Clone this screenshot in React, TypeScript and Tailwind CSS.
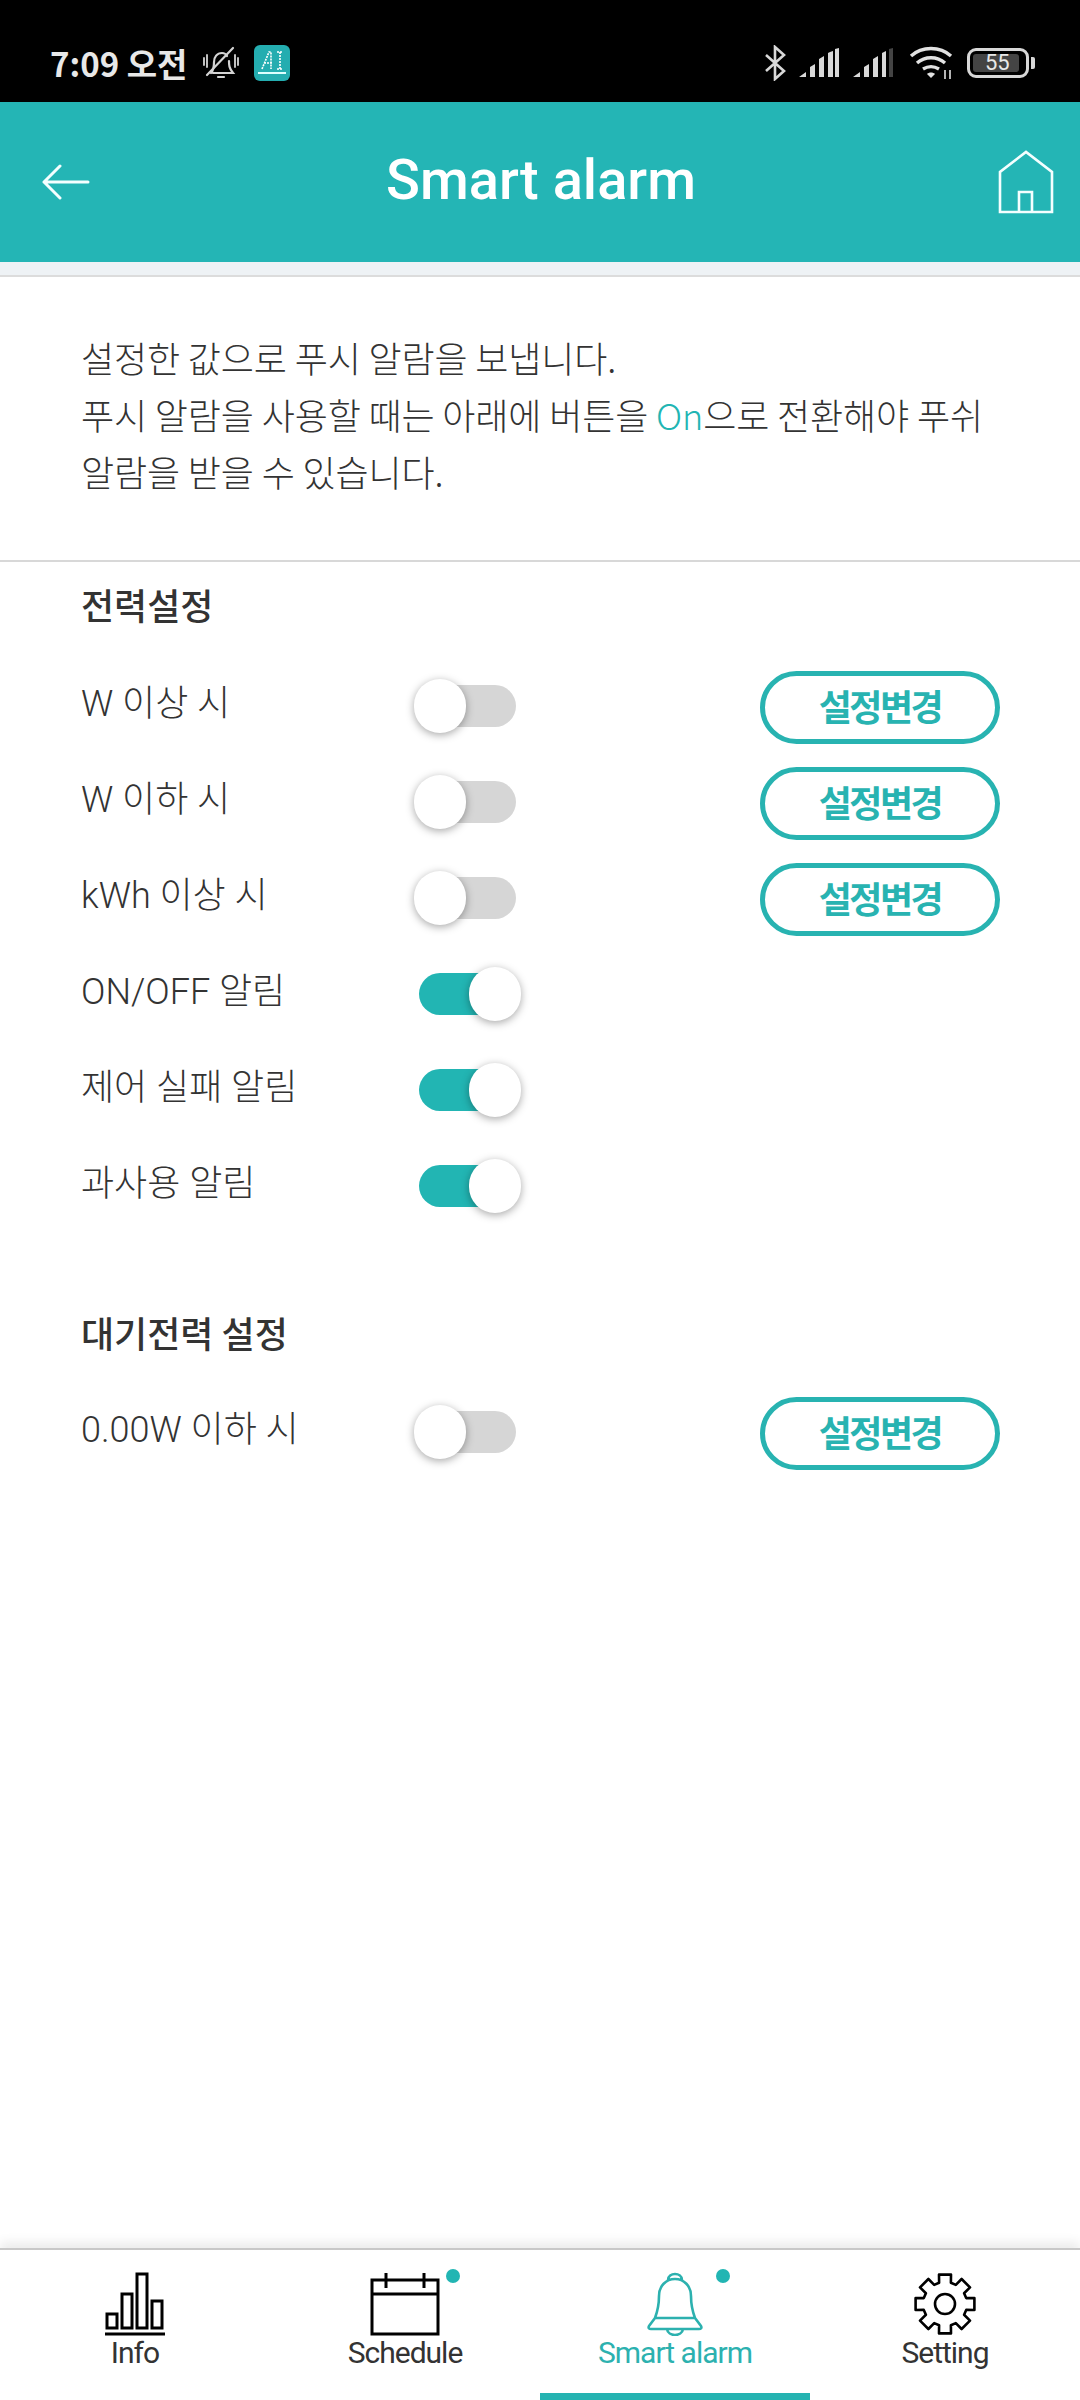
const font = { fontFamily: '"Noto Sans CJK KR", Roboto, sans-serif' };
const latinFirst = { fontFamily: 'Roboto, "Noto Sans CJK KR", sans-serif' };

function Toggle({ on }: { on?: boolean }) {
  return (
    <div className="relative h-[54px] w-[107px] flex items-center justify-center">
      <div className={on ? "h-[42px] w-[97px] rounded-full bg-[#22b5b3]" : "h-[42px] w-[97px] rounded-full bg-[#d6d6d6]"} />
      <div
        className={
          on
            ? "absolute right-0 top-0 h-[54px] w-[52px] rounded-full bg-white shadow-[0_2px_8px_rgba(0,0,0,0.35)]"
            : "absolute left-0 top-0 h-[54px] w-[52px] rounded-full bg-white shadow-[0_2px_8px_rgba(0,0,0,0.35)]"
        }
      />
    </div>
  );
}

function Row({ label, on, button }: { label: string; on?: boolean; button?: boolean }) {
  return (
    <div className="flex h-[96px] items-center pl-[81px] pr-[80px]">
      <div className="w-[333px] -mt-[6px] text-[36px] font-light text-[#333]" style={latinFirst}>
        {label}
      </div>
      <div className="-mt-[3px]">
        <Toggle on={on} />
      </div>
      {button && (
        <button className="ml-auto h-[73px] w-[240px] rounded-full border-[5px] border-[#28b3b1] pb-[4px] text-[36px] font-semibold leading-none tracking-[-2.5px] text-[#28b3b1]">
          설정변경
        </button>
      )}
    </div>
  );
}

function StatusBar() {
  return (
    <div className="flex h-[102px] items-center bg-black pl-[50px] pr-[45px] pt-[24px] text-[#e8e8e8]">
      <span className="text-[33px] font-bold leading-none">7:09 오전</span>
      <svg className="ml-[16px]" width="36" height="34" viewBox="0 0 36 34" fill="none" stroke="#d4d4d4" strokeWidth="2.2" strokeLinecap="round">
        <path d="M8 27c3-3 3-7 3-11 0-5 3-9 8-9 2 0 4 1 5 3M26 15c0 4 0 7 4 12H10M15 31h6" />
        <path d="M4 29 30 2" />
        <path d="M1 12v7M4 9v12M32 9v12M35 12v7" strokeWidth="1.8" />
      </svg>
      <svg className="ml-[15px]" width="36" height="36" viewBox="0 0 36 36">
        <rect width="36" height="36" rx="6" fill="#24adb0" />
        <path d="M8 24 15 7h2v17M23 7h6M26 7v17M23 24h6M10 18h8" stroke="#fff" strokeWidth="1.6" strokeDasharray="2 1" fill="none" />
        <rect x="4" y="27" width="28" height="2" fill="#dff" />
      </svg>
      <div className="ml-auto flex items-center">
        <svg width="22" height="36" viewBox="0 0 22 36" fill="none" stroke="#d8d8d8" strokeWidth="2.6">
          <path d="M2 10 20 26 11 34V2l9 8L2 26" />
        </svg>
        <svg className="ml-[13px]" width="41" height="30" viewBox="0 0 41 30" fill="#d8d8d8">
          <path d="M0 29 7 24V29ZM11 29V19l5-3V29ZM20 29V11l5-3V29ZM29 29V5l2-1 3-1V29ZM36 29V1l4-1V29Z" />
        </svg>
        <svg className="ml-[13px]" width="41" height="30" viewBox="0 0 41 30" fill="#d8d8d8">
          <path d="M0 29 7 24V29ZM11 29V19l5-3V29ZM20 29V11l5-3V29ZM29 29V5l4-2V29Z" />
          <path d="M36 29V1l4-1V29Z" fill="#444" />
        </svg>
        <svg className="ml-[15px]" width="44" height="34" viewBox="0 0 44 34" fill="none" stroke="#e2e2e2" strokeWidth="3.4">
          <path d="M2 10c11-10 29-10 40 0M8 17c8-7 20-7 28 0M14 23c5-3 11-3 16 0" />
          <path d="M22 32l-4-4c2-2 6-2 8 0Z" fill="#e2e2e2" stroke="none" />
          <path d="M36 24v9M41 24v9" strokeWidth="1.6" />
        </svg>
        <div className="relative ml-[14px] flex h-[30px] w-[62px] items-center rounded-[9px] border-[3px] border-[#d8d8d8] p-[3px]">
          <div className="h-full w-[46px] rounded-[3px] bg-[#444]" />
          <span className="absolute left-[15px] top-[-1px] text-[22px] leading-[26px] text-[#e8e8e8]" style={{ fontFamily: "Roboto, sans-serif" }}>
            55
          </span>
        </div>
        <div className="ml-[2px] h-[12px] w-[4px] rounded-r-[2px] bg-[#d8d8d8]" />
      </div>
    </div>
  );
}

function Header() {
  return (
    <div className="flex h-[160px] items-center justify-between bg-[#24b5b5] pl-[42px] pr-[26px]">
      <svg width="48" height="36" viewBox="0 0 48 36" fill="none" stroke="#f4ffff" strokeWidth="3" strokeLinecap="round" strokeLinejoin="round">
        <path d="M46 18H2M18 2 2 18l16 16" />
      </svg>
      <h1 className="-mt-[4px] mr-[6px] text-[56px] font-medium leading-none text-white" style={latinFirst}>
        Smart alarm
      </h1>
      <svg width="56" height="64" viewBox="0 0 56 64" fill="none" stroke="#f4ffff" strokeWidth="2.6">
        <path d="M2 62V22L28 2l26 20v40ZM21 62V42h13v20" />
      </svg>
    </div>
  );
}

function Gear() {
  // eight teeth around the wheel
  let d = "";
  for (let i = 0; i < 8; i++) {
    const a = (i * Math.PI) / 4 - Math.PI / 2;
    const pt = (r: number, o: number) => `${(32 + r * Math.cos(a + o)).toFixed(1)} ${(32 + r * Math.sin(a + o)).toFixed(1)}`;
    d += `${i === 0 ? "M" : "L"}${pt(22, -0.27)} L${pt(30, -0.2)} L${pt(30, 0.2)} L${pt(22, 0.27)} `;
  }
  return (
    <svg width="64" height="64" viewBox="0 0 64 64" fill="none" stroke="#000" strokeWidth="2.6" strokeLinejoin="round">
      <path d={d + "Z"} />
      <circle cx="32" cy="32" r="10" />
    </svg>
  );
}

function Tab({ label, active, dot, icon }: { label: string; active?: boolean; dot?: boolean; icon: React.ReactNode }) {
  return (
    <div className="relative flex flex-1 flex-col items-center pt-[22px]">
      <div className="flex h-[64px] items-center justify-center">{icon}</div>
      <div
        className={
          active
            ? "-mt-[1px] text-[30px] leading-[36px] tracking-[-1px] text-[#2cb1af]"
            : "-mt-[1px] text-[30px] leading-[36px] tracking-[-1px] text-[#333]"
        }
        style={{ fontFamily: "Roboto, sans-serif" }}
      >
        {label}
      </div>
      {dot && <div className="absolute left-[176px] top-[19px] h-[14px] w-[14px] rounded-full bg-[#22b5b3]" />}
      {active && <div className="absolute bottom-0 left-0 h-[7px] w-full bg-[#25b3b1]" />}
    </div>
  );
}

export default function App() {
  return (
    <div className="flex h-[2400px] w-[1080px] flex-col overflow-hidden bg-white" style={font}>
      <StatusBar />
      <Header />
      <div className="h-[15px] border-b-2 border-[#dcdcdc] bg-[#eef2f5]" />

      <div className="h-[285px] border-b-2 border-[#d8d8d8] px-[81px] pt-[52px] text-[36px] font-light leading-[57px] tracking-[-0.12px] text-[#333]">
        <p>설정한 값으로 푸시 알람을 보냅니다.</p>
        <p>
          푸시 알람을 사용할 때는 아래에 버튼을 <span className="text-[#22b5b3]">On</span>으로 전환해야 푸쉬
        </p>
        <p>알람을 받을 수 있습니다.</p>
      </div>

      <h2 className="pl-[81px] pt-[17px] text-[36px] font-medium leading-[50px] text-[#333]">전력설정</h2>
      <div className="mt-[30px]">
        <Row label="W 이상 시" button />
        <Row label="W 이하 시" button />
        <Row label="kWh 이상 시" button />
        <Row label="ON/OFF 알림" on />
        <Row label="제어 실패 알림" on />
        <Row label="과사용 알림" on />
      </div>

      <h2 className="mt-[72px] pl-[81px] text-[36px] font-medium leading-[50px] text-[#333]">대기전력 설정</h2>
      <div className="mt-[28px]">
        <Row label="0.00W 이하 시" button />
      </div>

      <div className="mt-auto flex h-[152px] border-t-2 border-[#c8c8c8] bg-white shadow-[0_-6px_10px_rgba(0,0,0,0.08)]">
        <Tab
          label="Info"
          icon={
            <svg width="62" height="64" viewBox="0 0 62 64" fill="none" stroke="#000" strokeWidth="3">
              <path d="M3 42h10v14H3ZM18 22h10v34H18ZM33 2h10v54H33ZM48 29h10v27H48ZM1 62h60" />
            </svg>
          }
        />
        <Tab
          label="Schedule"
          dot
          icon={
            <svg width="70" height="64" viewBox="0 0 70 64" fill="none" stroke="#000" strokeWidth="3">
              <path d="M2 8h66v54H2ZM2 22h66M16 1v15M54 1v15" />
            </svg>
          }
        />
        <Tab
          label="Smart alarm"
          active
          dot
          icon={
            <svg width="60" height="64" viewBox="0 0 60 64" fill="none" stroke="#2cb1af" strokeWidth="2.6" strokeLinejoin="round">
              <path d="M23 8c0-8 14-8 14 0M10 46c3-8 4-14 4-22 0-10 7-17 16-17s16 7 16 17c0 8 1 14 4 22M10 46H50M10 46l-6 8c-1 2 0 3 2 3h48c2 0 3-1 2-3l-6-8M22 57c1 8 15 8 16 0" />
            </svg>
          }
        />
        <Tab label="Setting" icon={<Gear />} />
      </div>
    </div>
  );
}
